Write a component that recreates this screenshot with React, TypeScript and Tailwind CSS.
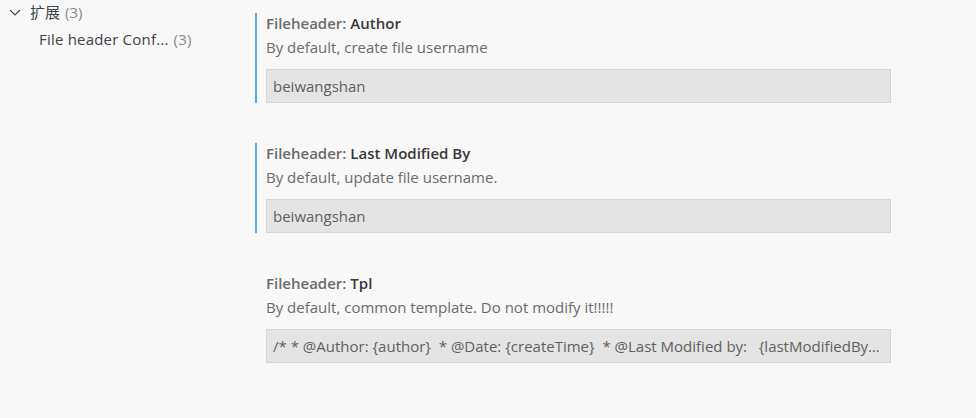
import React from "react";

type Setting = {
  category: string;
  name: string;
  description: string;
  value: string;
  focused?: boolean;
};

const settings: Setting[] = [
  {
    category: "Fileheader: ",
    name: "Author",
    description: "By default, create file username",
    value: "beiwangshan",
    focused: true,
  },
  {
    category: "Fileheader: ",
    name: "Last Modified By",
    description: "By default, update file username.",
    value: "beiwangshan",
    focused: true,
  },
  {
    category: "Fileheader: ",
    name: "Tpl",
    description: "By default, common template. Do not modify it!!!!!",
    value: "/* * @Author: {author}  * @Date: {createTime}  * @Last Modified by:   {lastModifiedBy}  * @Last Modified time: {updateTime}  */",
  },
];

const Chevron: React.FC = () => (
  <svg width="16" height="16" viewBox="0 0 16 16" fill="none">
    <path d="M3 6l5 5 5-5" stroke="#424242" strokeWidth="1.1" />
  </svg>
);

const App: React.FC = () => {
  return (
    <div
      className="w-[976px] h-[418px] bg-[#f8f8f8] flex text-[15px] text-[#616161] overflow-hidden"
      style={{ fontFamily: '"Open Sans", "Noto Sans CJK SC", sans-serif' }}
    >
      <div className="w-[255px] shrink-0 pt-[2px]">
        <div className="flex items-center h-[20px] pl-[7px]">
          <Chevron />
          <span className="ml-[7px] text-[#424242]">扩展</span>
          <span className="ml-[5px] text-[#8a8a8a]">(3)</span>
        </div>
        <div className="flex items-center h-[20px] pl-[39px] mt-[7px] tracking-[0.2px]">
          <span className="text-[#424242]">File header Conf...</span>
          <span className="ml-[5px] text-[#8a8a8a]">(3)</span>
        </div>
      </div>
      <div className="w-[636px] pt-[13px] flex flex-col gap-[40px]">
        {settings.map((s) => (
          <div
            key={s.name}
            className={`border-l-2 pl-[9px] ${s.focused ? "border-[#5fa8e3]" : "border-transparent"}`}
          >
            <div className="h-[20px] leading-[20px] font-semibold whitespace-nowrap">
              <span className="text-[#6b6b6b]">{s.category}</span>
              <span className="text-[#383838]">{s.name}</span>
            </div>
            <div className="mt-[4px] h-[20px] leading-[20px] text-[#6b6b6b] whitespace-nowrap">
              {s.description}
            </div>
            <div className="mt-[12px] h-[34px] bg-[#e4e4e4] border border-[#d6d6d6] px-[6px] pt-[1px] flex items-center">
              <span className="truncate whitespace-pre text-[#616161]">{s.value}</span>
            </div>
          </div>
        ))}
      </div>
    </div>
  );
};

export default App;
